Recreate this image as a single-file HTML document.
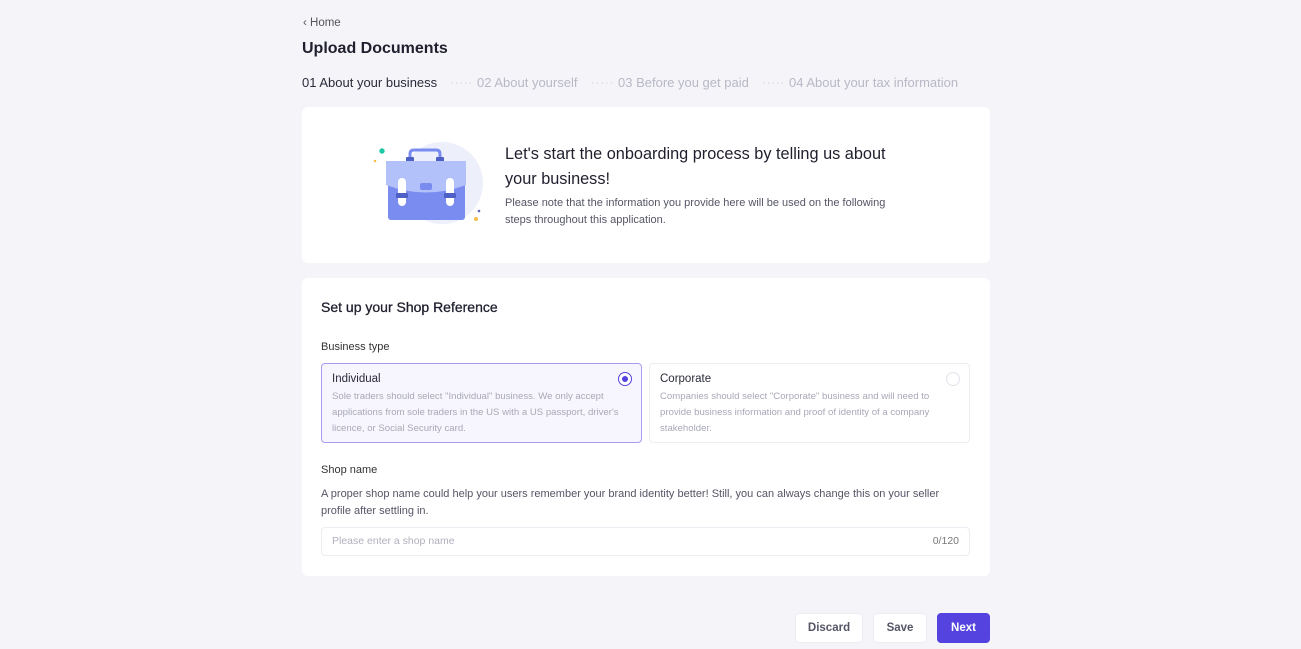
<!DOCTYPE html><html><head><style>
*{margin:0;padding:0;box-sizing:border-box}
body{width:1301px;height:649px;background:#f5f5f9;font-family:"Liberation Sans",sans-serif;color:#2a2a3a;position:relative;overflow:hidden}
.a{position:absolute}
.card{position:absolute;background:#fff;border-radius:6px}
.steps span{position:absolute;top:75px;font-size:13px;color:#b8b8c6}
.dots{letter-spacing:1px;font-size:11px!important;top:77px!important;color:#cfcfdb!important}
.opt{position:absolute;top:363px;width:321px;height:80px;border:1px solid #ececf2;border-radius:4px;padding:9px 10px}
.opt h4{font-size:11.5px;font-weight:normal;color:#2a2a3a;margin-bottom:4px}
.opt p{font-size:9.6px;line-height:16px;color:#a8a8b8;width:300px}
.btn{position:absolute;top:613px;height:30px;border-radius:4px;background:#fff;border:1px solid #ececf2;font-size:11.5px;font-weight:bold;color:#555566;text-align:center;line-height:28px}
</style></head><body>
<div class="a" style="left:303px;top:17px;font-size:11.5px;color:#555">‹ Home</div>
<div class="a" style="left:302px;top:40px;font-size:16px;font-weight:bold;color:#1f1f2e">Upload Documents</div>
<div class="steps">
<span style="left:302px;color:#2a2a3a">01 About your business</span>
<span class="dots" style="left:450px">·····</span>
<span style="left:477px">02 About yourself</span>
<span class="dots" style="left:591px">·····</span>
<span style="left:618px">03 Before you get paid</span>
<span class="dots" style="left:762px">·····</span>
<span style="left:789px">04 About your tax information</span>
</div>
<div class="card" style="left:302px;top:107px;width:688px;height:156px"></div>
<svg class="a" style="left:360px;top:130px" width="140" height="110" viewBox="0 0 140 110">
<circle cx="82" cy="53" r="41" fill="#edf0fb"/>
<circle cx="22" cy="21" r="2.7" fill="#1ec8a5"/>
<circle cx="15" cy="31" r="1.3" fill="#f5c04a"/>
<circle cx="119" cy="81" r="1.3" fill="#5d66c8"/>
<circle cx="116" cy="89" r="2" fill="#f5c04a"/>
<path d="M50 30 V24 Q50 20 54 20 H76 Q80 20 80 24 V30" fill="none" stroke="#7b8cf0" stroke-width="3"/>
<rect x="46" y="27" width="8" height="5" rx="1" fill="#4e5fc6"/><rect x="76" y="27" width="8" height="5" rx="1" fill="#4e5fc6"/>
<rect x="28" y="45" width="77" height="45" rx="3" fill="#7b8cf0"/>
<path d="M26 31 H106 V55 Q66 70 26 55Z" fill="#b3c1fb"/>
<rect x="60" y="53" width="12" height="7" rx="2" fill="#7b8cf0"/>
<rect x="38" y="48" width="8" height="28" rx="4" fill="#fff"/><rect x="86" y="48" width="8" height="28" rx="4" fill="#fff"/>
<rect x="36" y="63" width="12" height="5" rx="1" fill="#4e5fc6"/><rect x="84" y="63" width="12" height="5" rx="1" fill="#4e5fc6"/>
</svg>
<div class="a" style="left:505px;top:142px;font-size:16.3px;line-height:25px;color:#1f1f2e;width:405px">Let's start the onboarding process by telling us about your business!</div>
<div class="a" style="left:505px;top:195px;font-size:11px;line-height:17px;color:#555566;width:398px">Please note that the information you provide here will be used on the following steps throughout this application.</div>
<div class="card" style="left:302px;top:278px;width:688px;height:298px"></div>
<div class="a" style="left:321px;top:299px;font-size:14px;color:#1f1f2e;-webkit-text-stroke:0.3px #1f1f2e">Set up your Shop Reference</div>
<div class="a" style="left:321px;top:341px;font-size:11px;color:#333">Business type</div>
<div class="opt" style="left:321px;border-color:#a79cf0;background:#f7f6fe"><h4>Individual</h4><p>Sole traders should select "Individual" business. We only accept applications from sole traders in the US with a US passport, driver's licence, or Social Security card.</p>
<div class="a" style="left:296px;top:8px;width:14px;height:14px;border:1.5px solid #5543e0;border-radius:50%;background:#fff"><div style="margin:2.5px;width:6px;height:6px;border-radius:50%;background:#5543e0"></div></div></div>
<div class="opt" style="left:649px"><h4>Corporate</h4><p style="width:285px">Companies should select "Corporate" business and will need to provide business information and proof of identity of a company stakeholder.</p>
<div class="a" style="left:296px;top:8px;width:14px;height:14px;border:1px solid #e2e2ea;border-radius:50%"></div></div>
<div class="a" style="left:321px;top:464px;font-size:11px;color:#333">Shop name</div>
<div class="a" style="left:321px;top:486px;font-size:11px;line-height:17px;color:#555566;width:640px">A proper shop name could help your users remember your brand identity better! Still, you can always change this on your seller profile after settling in.</div>
<div class="a" style="left:321px;top:527px;width:649px;height:29px;border:1px solid #ececf2;border-radius:4px;font-size:10.5px;color:#b0b0bf;line-height:27px;padding:0 10px">Please enter a shop name<span style="float:right;color:#777">0/120</span></div>
<div class="btn" style="left:795px;width:68px">Discard</div>
<div class="btn" style="left:873px;width:54px">Save</div>
<div class="btn" style="left:937px;width:53px;background:#5543e0;border-color:#5543e0;color:#fff">Next</div>
</body></html>
